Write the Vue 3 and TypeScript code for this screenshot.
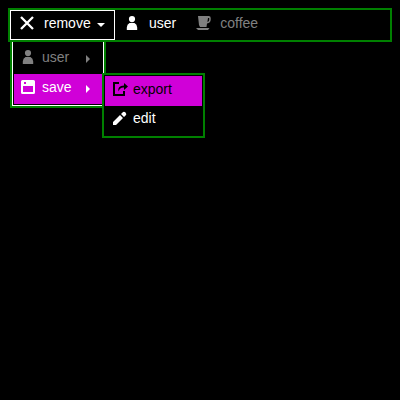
<script setup lang="ts">
interface Item {
  icon: string
  label: string
  state?: 'disabled' | 'active' | 'exported'
  arrow?: boolean
}

const bar: Item[] = [
  { icon: 'user', label: 'user' },
  { icon: 'coffee', label: 'coffee', state: 'disabled' },
]
const menu: Item[] = [
  { icon: 'user', label: 'user', state: 'disabled', arrow: true },
  { icon: 'save', label: 'save', state: 'active', arrow: true },
]
const submenu: Item[] = [
  { icon: 'export', label: 'export', state: 'exported' },
  { icon: 'edit', label: 'edit' },
]

const paths: Record<string, string> = {
  user: 'M8 1a3.100 3.100 0 1 1 0 6.200a3.100 3.100 0 0 1 0-6.200zM5.500 8h5Q13 9 13.200 12.500V15H2.800v-2.500Q3 9 5.500 8z',
  coffee: 'M2 1h10.700q2 0 2 2v1.500q0 3.300-3.700 4L10.500 12H4L3 10zM12 3l-.6 4q1.800-.3 1.800-2V3zM0 13h13.500l-1.500 2H2z',
  save: 'M2.500 1h11Q15 1 15 2.500v11Q15 15 13.500 15h-11Q1 15 1 13.500v-11Q1 1 2.500 1zM3 7v6h10V7zM4 3v2h2V3z',
  export: 'M1 1h6v2H3v10h8v-3h2v5H1zM12 2l4 3.500l-4 3.500V6.500Q8 6 6.500 10.500Q5 4.800 12 4.500z',
  edit: 'M1 12L8 5l3 3L4 15H1zM9 4L10.300 2.700a2.200 2.200 0 1 1 3.100 3.100L12 7z',
}
</script>

<template>
  <div class="page">
    <div class="bar">
      <div class="dropdown">
        <div class="head">
          <svg class="icon" viewBox="0 0 16 16"><path d="M2 2L14 14M14 2L2 14" stroke="currentColor" stroke-width="2.300" /></svg>
          <span>remove</span>
          <svg class="caret" viewBox="0 0 8 4"><path d="M0 0h8L4 4z" fill="currentColor" /></svg>
        </div>
        <div class="menu">
          <div v-for="i in menu" :key="i.label" class="row" :class="i.state">
            <svg class="icon" viewBox="0 0 16 16"><path :d="paths[i.icon]" fill="currentColor" fill-rule="evenodd" /></svg>
            <span>{{ i.label }}</span>
            <svg v-if="i.arrow" class="arrow" viewBox="0 0 4 8"><path d="M0 0v8l4-4z" fill="currentColor" /></svg>
          </div>
          <div class="submenu">
            <div v-for="i in submenu" :key="i.label" class="row" :class="i.state">
              <svg class="icon" viewBox="0 0 16 16"><path :d="paths[i.icon]" fill="currentColor" fill-rule="evenodd" /></svg>
              <span>{{ i.label }}</span>
            </div>
          </div>
        </div>
      </div>
      <div v-for="i in bar" :key="i.label" class="item" :class="[i.icon, i.state]">
        <svg class="icon" viewBox="0 0 16 16"><path :d="paths[i.icon]" fill="currentColor" fill-rule="evenodd" /></svg>
        <span>{{ i.label }}</span>
      </div>
    </div>
  </div>
</template>

<style>
body {
  background: #000;
}
</style>

<style scoped>
.page {
  box-sizing: border-box;
  min-height: 100vh;
  padding: 8px;
  background: #000;
}
.bar {
  display: flex;
  box-sizing: border-box;
  height: 34px;
  border: 2px solid #008000;
  color: #fff;
  font: 14px/16px 'Liberation Sans', Arial, sans-serif;
}
.dropdown {
  position: relative;
}
.head {
  display: flex;
  box-sizing: border-box;
  width: 105px;
  height: 30px;
  padding: 4px 0 0 8px;
  border: 1px solid #fff;
}
.icon {
  width: 16px;
  height: 16px;
  flex: none;
}
.head span {
  margin-left: 9px;
}
.caret {
  width: 8px;
  height: 4px;
  margin: 8px 0 0 6px;
}
.item {
  display: flex;
  padding-top: 5px;
}
.item.user {
  padding-left: 9px;
}
.item.coffee {
  padding-left: 20px;
}
.item.user span {
  margin-left: 9px;
}
.item.coffee span {
  margin-left: 8px;
}
.disabled {
  color: #808080;
}
.menu {
  position: absolute;
  top: 30px;
  left: 0;
  box-sizing: border-box;
  width: 96px;
  height: 68px;
  border: 2px solid #008000;
  box-shadow: inset 1px 0 #fff, inset -1px -1px #fff;
  padding: 2px;
  background: #000;
}
.row {
  display: flex;
  box-sizing: border-box;
  height: 30px;
  padding: 5px 0 0 6px;
}
.row span {
  margin-left: 6px;
}
.arrow {
  width: 4px;
  height: 8px;
  margin: 6px 12px 0 auto;
}
.active {
  background: #d000d8;
}
.submenu {
  position: absolute;
  top: 31px;
  left: 90px;
  box-sizing: border-box;
  width: 103px;
  height: 65px;
  padding: 1px;
  border: 2px solid #008000;
  background: #000;
}
.submenu .row {
  padding-left: 7px;
}
.submenu .row span {
  margin-left: 5px;
}
.submenu .row:last-child {
  padding-top: 4px;
}
.exported {
  background: #d000d8;
  color: #000;
}
</style>
